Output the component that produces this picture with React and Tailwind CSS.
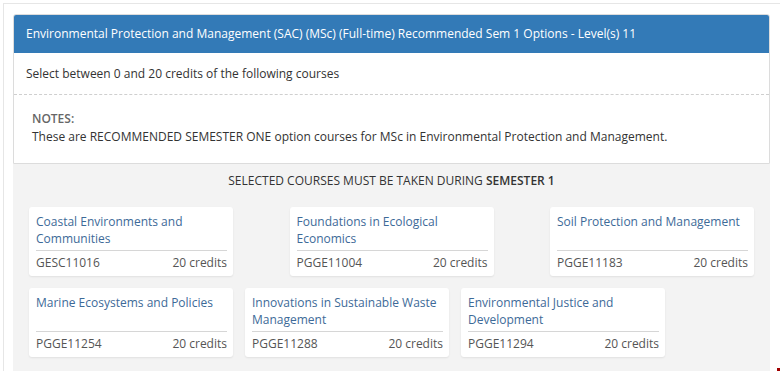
import React from "react";

const row1 = [
  { title: "Coastal Environments and Communities", code: "GESC11016" },
  { title: "Foundations in Ecological Economics", code: "PGGE11004" },
  { title: "Soil Protection and Management", code: "PGGE11183" },
];

const row2 = [
  { title: "Marine Ecosystems and Policies", code: "PGGE11254" },
  { title: "Innovations in Sustainable Waste Management", code: "PGGE11288" },
  { title: "Environmental Justice and Development", code: "PGGE11294" },
];

function CourseCard({ title, code }) {
  return (
    <div className="flex flex-col w-[204px] h-[69px] bg-white rounded-[3px] shadow-[0_1px_2px_rgba(0,0,0,0.08)] pl-[7px] pr-[6px] pt-[6px]">
      <div className="h-[37px] text-[12px] leading-[17px] text-[#3d6a98]">{title}</div>
      <div className="flex justify-between items-center border-t border-[#d6d6d6] h-[24px] text-[12px] text-[#555]">
        <span>{code}</span>
        <span>20 credits</span>
      </div>
    </div>
  );
}

export default function App() {
  return (
    <div className="relative w-[780px] h-[371px] overflow-hidden bg-white font-['Open_Sans',sans-serif]">
      <div className="ml-[3px] mt-[3px] border-l border-t border-[#e6e6e6] pl-[9px] pt-[10px] pr-[10px] h-full">
        <div className="w-[757px] border border-[#dcdcdc] rounded-t-[3px] bg-white">
          <div className="h-[38px] bg-[#337ab7] rounded-t-[2px] flex items-center pl-[12px] text-white text-[12px]">
            Environmental Protection and Management (SAC) (MSc) (Full-time) Recommended Sem 1 Options - Level(s) 11
          </div>
          <div className="h-[42px] flex items-center pl-[12px] text-[12px] text-[#333] border-b border-dashed border-[#cfcfcf]">
            Select between 0 and 20 credits of the following courses
          </div>
          <div className="h-[68px] pl-[18px] pt-[15px] text-[12px] leading-[18px] text-[#333]">
            <div className="font-semibold text-[#666]">NOTES:</div>
            <div>These are RECOMMENDED SEMESTER ONE option courses for MSc in Environmental Protection and Management.</div>
          </div>
        </div>
        <div className="w-[757px] bg-[#f3f3f3] px-[16px] pt-[8px] h-[220px]">
          <div className="text-center text-[12px] text-[#333] leading-[18px]">
            SELECTED COURSES MUST BE TAKEN DURING <span className="font-semibold">SEMESTER 1</span>
          </div>
          <div className="flex justify-between mt-[17px]">
            {row1.map((c) => (
              <CourseCard key={c.code} {...c} />
            ))}
          </div>
          <div className="flex gap-[12px] mt-[12px]">
            {row2.map((c) => (
              <CourseCard key={c.code} {...c} />
            ))}
          </div>
        </div>
      </div>
      <div className="absolute right-0 bottom-0 w-[3px] h-[3px] bg-[#a00000]" />
    </div>
  );
}
